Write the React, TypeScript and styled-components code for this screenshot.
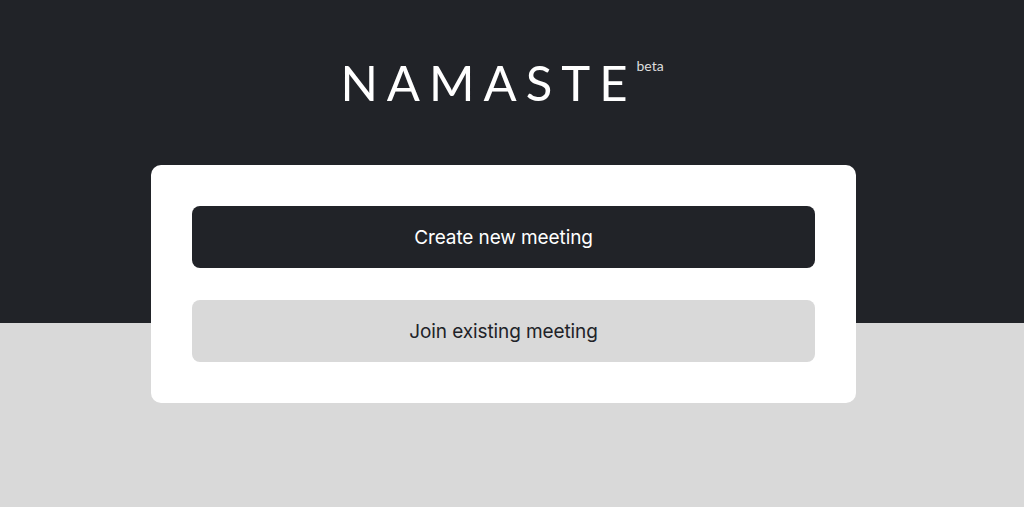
import React, { ReactElement } from "react";
import styled, { createGlobalStyle } from "styled-components";

const GlobalStyle = createGlobalStyle`
	html, body {
		margin: 0;
		padding: 0;
	}
	body {
		font-family: "Inter", "Open Sans", sans-serif;
	}
`;

export default function App(): ReactElement {
	return (
		<>
			<GlobalStyle />
			<StyledPage>
				<StyledHeader>
					<StyledLogo>
						NAMASTE<sup>beta</sup>
					</StyledLogo>
				</StyledHeader>
				<StyledCard>
					<StyledButton $variant="primary">Create new meeting</StyledButton>
					<StyledButton $variant="secondary">Join existing meeting</StyledButton>
				</StyledCard>
			</StyledPage>
		</>
	);
}

const StyledPage = styled.div`
	min-height: 507px;
	padding-right: 17px;
	display: flex;
	flex-direction: column;
	align-items: center;
	background: linear-gradient(to bottom, #212328 0, #212328 323px, #d9d9d9 323px);
`;

const StyledHeader = styled.header`
	height: 165px;
	display: flex;
	justify-content: center;
	padding-top: 57px;
	padding-right: 30px;
	box-sizing: border-box;
`;

const StyledLogo = styled.h1`
	margin: 0;
	position: relative;
	color: #ffffff;
	font-family: "Lato", "Inter", sans-serif;
	font-weight: 400;
	font-size: 49px;
	line-height: 50px;
	letter-spacing: 9px;

	sup {
		position: absolute;
		top: 2px;
		left: 100%;
		font-size: 14px;
		line-height: 14px;
		letter-spacing: 0;
		color: #dddddd;
	}
`;

const StyledCard = styled.div`
	width: 705px;
	box-sizing: border-box;
	padding: 41px;
	background: #ffffff;
	border-radius: 10px;
	display: flex;
	flex-direction: column;
	gap: 32px;
`;

const StyledButton = styled.button<{ $variant: "primary" | "secondary" }>`
	height: 62px;
	border: none;
	border-radius: 8px;
	font-family: "Inter", "Open Sans", sans-serif;
	font-size: 19px;
	letter-spacing: -0.1px;
	cursor: pointer;
	background: ${(p) => (p.$variant === "primary" ? "#212328" : "#d9d9d9")};
	color: ${(p) => (p.$variant === "primary" ? "#ffffff" : "#212328")};
`;
